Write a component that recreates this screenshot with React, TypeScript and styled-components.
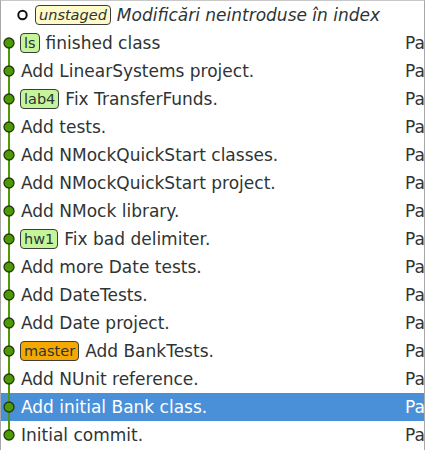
import React from "react";
import styled, { createGlobalStyle } from "styled-components";

const Global = createGlobalStyle`
  html, body { margin: 0; padding: 0; background: #ffffff; }
  body { font-family: "DejaVu Sans", "Open Sans", sans-serif; }
`;

const Frame = styled.div`
  width: 425px;
  height: 450px;
  box-sizing: border-box;
  border-left: 1px solid #a8a8a8;
  border-top: 1px solid #c8c8c8;
  border-right: 1px solid #a8a8a8;
  overflow: hidden;
  background: #fff;
`;

const Row = styled.div<{ $selected?: boolean }>`
  display: flex;
  align-items: center;
  height: 28px;
  background: ${(p) => (p.$selected ? "#4a90d9" : "transparent")};
  color: ${(p) => (p.$selected ? "#ffffff" : "#2e3436")};
`;

const MainCell = styled.div`
  flex: 0 0 403px;
  display: flex;
  align-items: center;
  height: 100%;
  overflow: hidden;
  white-space: nowrap;
`;

const AuthorCell = styled.div`
  flex: 1;
  overflow: hidden;
  white-space: nowrap;
  font-size: 17px;
  padding-left: 1px;
`;

const Graph = styled.svg`
  flex: 0 0 auto;
  display: block;
`;

const Message = styled.span<{ $italic?: boolean }>`
  font-size: 17px;
  font-style: ${(p) => (p.$italic ? "italic" : "normal")};
  margin-left: 1px;
`;

const Badge = styled.span<{ $bg: string; $italic?: boolean }>`
  display: inline-flex;
  align-items: center;
  height: 20px;
  box-sizing: border-box;
  padding: 0 3px;
  margin-right: 5px;
  border: 1px solid #3c3c3c;
  border-radius: 4px;
  background: ${(p) => p.$bg};
  color: #2e3436;
  font-size: 14.5px;
  font-style: ${(p) => (p.$italic ? "italic" : "normal")};
`;

type Commit = {
  msg: string;
  badge?: { text: string; bg: string };
  kind?: "first" | "last" | "mid";
};

const GREEN_BADGE = "#c5f59a";
const commits: Commit[] = [
  { msg: "finished class", badge: { text: "ls", bg: GREEN_BADGE }, kind: "first" },
  { msg: "Add LinearSystems project." },
  { msg: "Fix TransferFunds.", badge: { text: "lab4", bg: GREEN_BADGE } },
  { msg: "Add tests." },
  { msg: "Add NMockQuickStart classes." },
  { msg: "Add NMockQuickStart project." },
  { msg: "Add NMock library." },
  { msg: "Fix bad delimiter.", badge: { text: "hw1", bg: GREEN_BADGE } },
  { msg: "Add more Date tests." },
  { msg: "Add DateTests." },
  { msg: "Add Date project." },
  { msg: "Add BankTests.", badge: { text: "master", bg: "#f5a800" } },
  { msg: "Add NUnit reference." },
  { msg: "Add initial Bank class." },
  { msg: "Initial commit.", kind: "last" },
];

const Lane: React.FC<{ kind?: string }> = ({ kind }) => (
  <Graph width={19} height={28} viewBox="0 0 19 28">
    <line
      x1={8}
      x2={8}
      y1={kind === "first" ? 14 : 0}
      y2={kind === "last" ? 14 : 28}
      stroke="#4e9a06"
      strokeWidth={2}
    />
    <circle cx={8} cy={14} r={5} fill="#4e9a06" stroke="#233a06" strokeWidth={1.3} />
  </Graph>
);

export default function App() {
  return (
    <>
      <Global />
      <Frame>
        <Row>
          <MainCell>
            <Graph width={34} height={28} viewBox="0 0 34 28">
              <circle cx={21.5} cy={14} r={4.2} fill="#fff" stroke="#111" strokeWidth={2} />
            </Graph>
            <Badge $bg="#fffbc8" $italic>
              unstaged
            </Badge>
            <Message $italic>Modificări neintroduse în index</Message>
          </MainCell>
          <AuthorCell />
        </Row>
        {commits.map((c, i) => (
          <Row key={i} $selected={c.msg === "Add initial Bank class."}>
            <MainCell>
              <Lane kind={c.kind} />
              {c.badge && <Badge $bg={c.badge.bg}>{c.badge.text}</Badge>}
              <Message>{c.msg}</Message>
            </MainCell>
            <AuthorCell>Pa</AuthorCell>
          </Row>
        ))}
      </Frame>
    </>
  );
}
